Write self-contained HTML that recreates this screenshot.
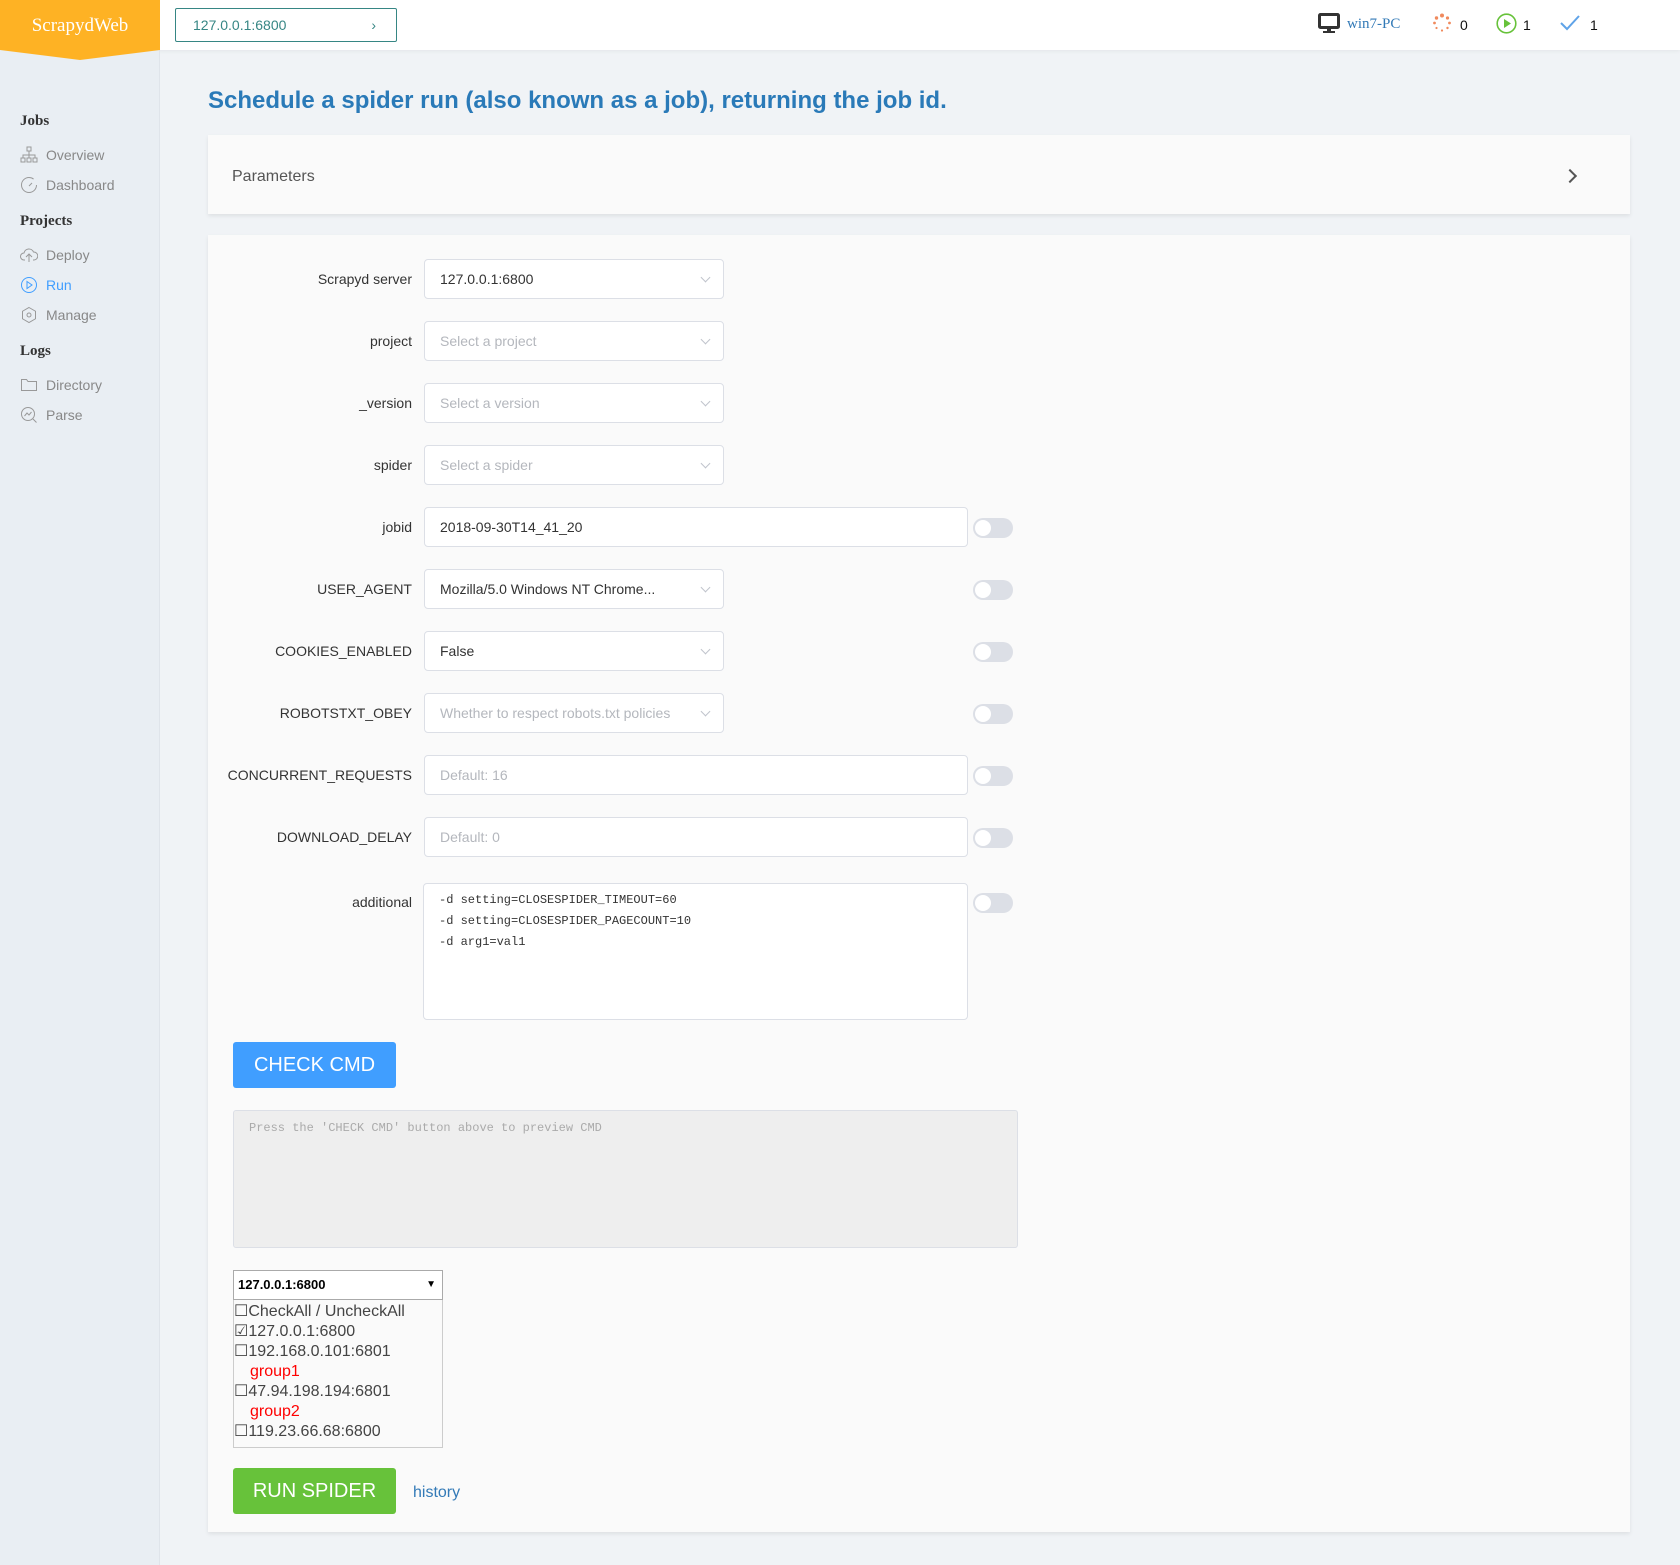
<!DOCTYPE html>
<html><head><meta charset="utf-8"><style>
*{box-sizing:border-box;margin:0;padding:0}
body{width:1680px;height:1565px;background:#f0f3f6;font-family:"Liberation Sans",Arial,sans-serif;position:relative;overflow:hidden;color:#606266}
.a{position:absolute}
#top{left:0;top:0;width:1680px;height:50px;background:#fff;box-shadow:0 1px 4px rgba(0,0,0,.06)}
#side{left:0;top:50px;width:160px;height:1515px;background:#e9eef3;border-right:1px solid #dfe4ea}
#logo{left:0;top:0;width:160px;height:60px;background:#feb224;clip-path:polygon(0 0,160px 0,160px 50px,80px 60px,0 50px);color:#fff;font-family:"Liberation Serif",serif;font-size:19px;text-align:center;line-height:52px}
.sh{left:20px;font-family:"Liberation Serif",serif;font-weight:bold;font-size:15px;color:#333}
.si{left:20px;font-size:14px;color:#888;display:flex;align-items:center;gap:8px}
.si svg{width:18px;height:18px}
.lab{width:210px;left:202px;text-align:right;font-size:14px;color:#333}
.inp{left:424px;height:40px;border:1px solid #dcdfe6;border-radius:4px;background:#fff;font-size:14px;color:#333;padding-left:15px;line-height:38px}
.ph{color:#b4b7bd}
.sel{width:300px}
.sel:after{content:"";position:absolute;right:14px;top:14px;width:6px;height:6px;border-right:1px solid #c0c4cc;border-bottom:1px solid #c0c4cc;transform:rotate(45deg)}
.wide{width:544px}
.tg{left:973px;width:40px;height:20px;border-radius:10px;background:#dcdfe6}
.tg:after{content:"";position:absolute;left:2px;top:2px;width:16px;height:16px;border-radius:50%;background:#fff}
.mono{font-family:"Liberation Mono","DejaVu Sans Mono",monospace}
</style></head><body>
<div id="top" class="a">
 <div class="a" style="left:175px;top:8px;width:222px;height:34px;border:1px solid #368684;border-radius:2px;color:#368684;font-size:14px;line-height:32px;padding-left:17px">127.0.0.1:6800<span class="a" style="right:20px;top:0">›</span></div>
 <svg class="a" style="left:1318px;top:13px" width="22" height="21" viewBox="0 0 22 21"><rect x="1.5" y="1.5" width="19" height="13" rx="1" fill="none" stroke="#333" stroke-width="3"/><rect x="9" y="15" width="4" height="3" fill="#333"/><rect x="5" y="18" width="12" height="2" fill="#333"/></svg>
 <div class="a" style="left:1347px;top:16px;font-family:'Liberation Serif',serif;font-size:15px;color:#337ab7">win7-PC</div>
 <svg class="a" style="left:1432px;top:13px" width="20" height="20" viewBox="0 0 20 20" fill="#f08a5d"><circle cx="10" cy="2.5" r="2"/><circle cx="15.5" cy="5" r="1.6"/><circle cx="17.5" cy="10" r="1.4"/><circle cx="15.5" cy="15" r="1.2"/><circle cx="10" cy="17.5" r="1.1"/><circle cx="4.5" cy="15" r="1.1"/><circle cx="2.5" cy="10" r="1.4"/><circle cx="4.5" cy="5" r="1.7"/></svg>
 <div class="a" style="left:1460px;top:17px;font-size:14px;color:#111">0</div>
 <svg class="a" style="left:1496px;top:13px" width="21" height="21" viewBox="0 0 21 21"><circle cx="10.5" cy="10.5" r="9.3" fill="none" stroke="#67c23a" stroke-width="1.6"/><path d="M8 6l7 4.5-7 4.5z" fill="#67c23a"/></svg>
 <div class="a" style="left:1523px;top:17px;font-size:14px;color:#111">1</div>
 <svg class="a" style="left:1560px;top:15px" width="20" height="16" viewBox="0 0 20 16"><path d="M1 8l6 6L19 1" fill="none" stroke="#5fa3e8" stroke-width="2"/></svg>
 <div class="a" style="left:1590px;top:17px;font-size:14px;color:#111">1</div>
</div>
<div id="side" class="a"></div>
<div id="logo" class="a">ScrapydWeb</div>
<div class="a sh" style="top:113px">Jobs</div>
<div class="a si" style="top:146px"><svg viewBox="0 0 18 18" fill="none" stroke="#999"><rect x="7" y="1" width="4" height="4"/><rect x="1" y="12" width="4" height="4"/><rect x="7" y="12" width="4" height="4"/><rect x="13" y="12" width="4" height="4"/><path d="M9 5v7M3 12V9h12v3"/></svg>Overview</div>
<div class="a si" style="top:176px"><svg viewBox="0 0 18 18" fill="none" stroke="#999"><circle cx="9" cy="9" r="7.5" stroke-dasharray="40 7"/><path d="M9 10l3-3"/></svg>Dashboard</div>
<div class="a sh" style="top:213px">Projects</div>
<div class="a si" style="top:246px"><svg viewBox="0 0 18 18" fill="none" stroke="#999"><path d="M5 14H4a3.5 3.5 0 010-7 5 5 0 019.5-1A3.5 3.5 0 0114 14h-1M9 16V8M6 11l3-3 3 3"/></svg>Deploy</div>
<div class="a si" style="top:276px;color:#409eff"><svg viewBox="0 0 18 18" fill="none" stroke="#409eff"><circle cx="9" cy="9" r="7.5"/><path d="M7 5.5l5 3.5-5 3.5z"/></svg>Run</div>
<div class="a si" style="top:306px"><svg viewBox="0 0 18 18" fill="none" stroke="#999"><path d="M9 1.5l6.5 3.75v7.5L9 16.5l-6.5-3.75v-7.5z"/><circle cx="9" cy="9" r="2"/></svg>Manage</div>
<div class="a sh" style="top:343px">Logs</div>
<div class="a si" style="top:376px"><svg viewBox="0 0 18 18" fill="none" stroke="#999"><path d="M1.5 3.5h5l1.5 2h8.5v9h-15z"/></svg>Directory</div>
<div class="a si" style="top:406px"><svg viewBox="0 0 18 18" fill="none" stroke="#999"><circle cx="8" cy="8" r="6.5"/><path d="M13 13l3.5 3.5M4.5 10l2.5-3 2 2 2.5-3"/></svg>Parse</div>

<div class="a" style="left:208px;top:87px;font-size:24px;font-weight:bold;color:#2a7ab8">Schedule a spider run (also known as a job), returning the job id.</div>
<div class="a" style="left:208px;top:135px;width:1422px;height:79px;background:#fafafa;box-shadow:0 2px 4px rgba(0,0,0,.08)">
 <div class="a" style="left:24px;top:33px;font-size:16px;color:#555">Parameters</div>
 <div class="a" style="left:1357px;top:36px;width:10px;height:10px;border-right:2px solid #555;border-top:2px solid #555;transform:rotate(45deg)"></div>
</div>
<div class="a" style="left:208px;top:235px;width:1422px;height:1297px;background:#fafafa;box-shadow:0 2px 4px rgba(0,0,0,.08)"></div>

<div class="a lab" style="top:271px">Scrapyd server</div><div class="a inp sel" style="top:259px">127.0.0.1:6800</div>
<div class="a lab" style="top:333px">project</div><div class="a inp sel ph" style="top:321px">Select a project</div>
<div class="a lab" style="top:395px">_version</div><div class="a inp sel ph" style="top:383px">Select a version</div>
<div class="a lab" style="top:457px">spider</div><div class="a inp sel ph" style="top:445px">Select a spider</div>
<div class="a lab" style="top:519px">jobid</div><div class="a inp wide" style="top:507px">2018-09-30T14_41_20</div><div class="a tg" style="top:518px"></div>
<div class="a lab" style="top:581px">USER_AGENT</div><div class="a inp sel" style="top:569px">Mozilla/5.0 Windows NT Chrome...</div><div class="a tg" style="top:580px"></div>
<div class="a lab" style="top:643px">COOKIES_ENABLED</div><div class="a inp sel" style="top:631px">False</div><div class="a tg" style="top:642px"></div>
<div class="a lab" style="top:705px">ROBOTSTXT_OBEY</div><div class="a inp sel ph" style="top:693px">Whether to respect robots.txt policies</div><div class="a tg" style="top:704px"></div>
<div class="a lab" style="top:767px">CONCURRENT_REQUESTS</div><div class="a inp wide ph" style="top:755px">Default: 16</div><div class="a tg" style="top:766px"></div>
<div class="a lab" style="top:829px">DOWNLOAD_DELAY</div><div class="a inp wide ph" style="top:817px">Default: 0</div><div class="a tg" style="top:828px"></div>
<div class="a lab" style="top:894px">additional</div>
<div class="a mono" style="left:423px;top:883px;width:545px;height:137px;border:1px solid #dcdfe6;border-radius:4px;background:#fff;font-size:12px;color:#333;padding:6px 15px;line-height:21px">-d setting=CLOSESPIDER_TIMEOUT=60<br>-d setting=CLOSESPIDER_PAGECOUNT=10<br>-d arg1=val1</div>
<div class="a tg" style="top:893px"></div>
<div class="a" style="left:233px;top:1042px;width:163px;height:46px;background:#409eff;border-radius:3px;color:#fff;font-size:20px;text-align:center;line-height:46px">CHECK CMD</div>
<div class="a mono" style="left:233px;top:1110px;width:785px;height:138px;border:1px solid #dcdfe6;border-radius:3px;background:#eeeeee;font-size:12px;color:#aaa;padding:10px 15px">Press the 'CHECK CMD' button above to preview CMD</div>
<div class="a" style="left:233px;top:1270px;width:210px;height:30px;border:1px solid #aaa;background:#fff;font-size:13px;font-weight:bold;color:#000;line-height:28px;padding-left:4px">127.0.0.1:6800<span class="a" style="right:6px;top:0;font-size:10px">▼</span></div>
<div class="a" style="left:233px;top:1300px;width:210px;height:148px;border:1px solid #ccc;border-top:none;font-size:16px;color:#444;line-height:20px;padding-top:2px">
<div>☐CheckAll / UncheckAll</div><div>☑127.0.0.1:6800</div><div>☐192.168.0.101:6801</div><div style="color:#f00;padding-left:16px">group1</div><div>☐47.94.198.194:6801</div><div style="color:#f00;padding-left:16px">group2</div><div>☐119.23.66.68:6800</div></div>
<div class="a" style="left:233px;top:1468px;width:163px;height:46px;background:#67c23a;border-radius:3px;color:#fff;font-size:20px;text-align:center;line-height:46px">RUN SPIDER</div>
<div class="a" style="left:413px;top:1484px;font-size:16px;color:#337ab7">history</div>
</body></html>
